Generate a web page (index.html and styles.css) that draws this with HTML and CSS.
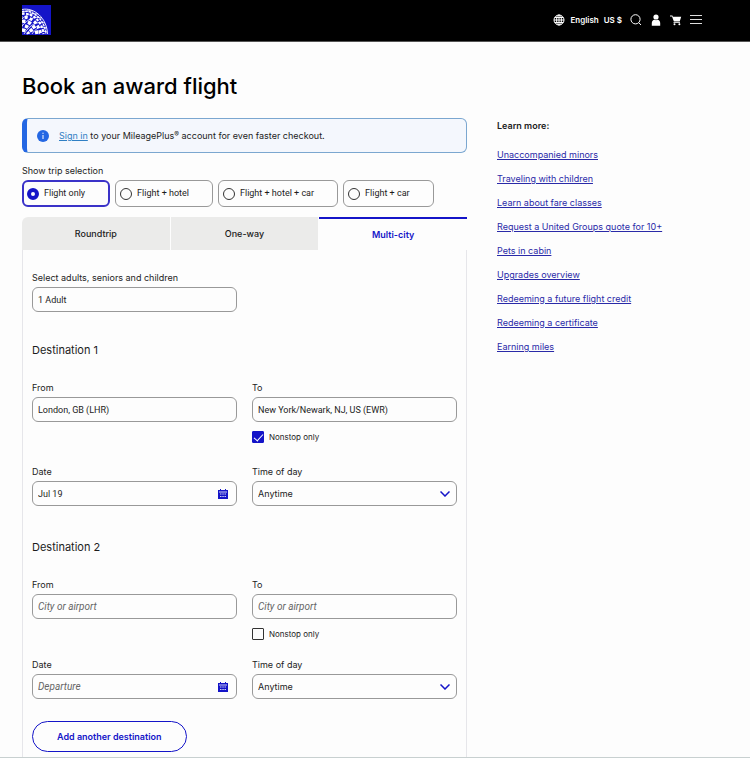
FILE: index.html
```html
<!doctype html>
<html lang="en">
<head>
    <meta charset="UTF-8">
    <meta name="viewport" content="width=device-width, initial-scale=1.0">
    <title>Book an award flight</title>
    <link rel="stylesheet" href="styles.css">
</head>
<body>
<header class="topbar">
    <a href="#" class="logo" aria-label="Home">
        <svg width="29" height="30" viewBox="0 0 29 30">
            <rect width="29" height="30" fill="#1414c8"/>
            <g fill="none" stroke="#fff">
                <path d="M0 4.500C12 2 25 13 25.500 29" stroke-width=".9"/>
                <path d="M0 6.500C11 4 23 15 23.800 29" stroke-width="1.400" stroke-dasharray="2.500 .8"/>
                <path d="M0 9C10 7 20 16 21.500 29" stroke-width="2.200" stroke-dasharray="2.600 1.400"/>
                <path d="M0 12.500C9 11 17 19 18.500 29" stroke-width="3" stroke-dasharray="3 2.200" stroke-dashoffset="2.500"/>
                <path d="M0 16.500C7 15 14 22 15 29" stroke-width="3.400" stroke-dasharray="3.400 2.600"/>
                <path d="M0 20.500C5 20 10 25 11 29" stroke-width="3.400" stroke-dasharray="3.400 2.600" stroke-dashoffset="3"/>
                <path d="M0 25C3 25 6 27 6.500 29" stroke-width="3.400" stroke-dasharray="3.400 2.400"/>
                <path d="M0 8C3 6 7 5 11 6M0 14C5 9 10 8 16 9M0 21C6 14 12 11 20 13M2 29C8 20 14 16 23 18M10 29C14 23 18 21 25 23M17 29C20 26 22 26 25 27" stroke-width=".8"/>
            </g>
        </svg>
    </a>
    <nav class="tools">
        <a href="#" class="language">
            <svg width="12" height="12" viewBox="0 0 12 12" fill="none" stroke="#fff">
                <circle cx="6" cy="6" r="5"/>
                <ellipse cx="6" cy="6" rx="2.400" ry="5"/>
                <path d="M6 1v10M1 6h10M1.800 3.500h8.400M1.800 8.500h8.400"/>
            </svg>
            <span>English</span>
            <span>US $</span>
        </a>
        <button class="tool" aria-label="Search">
            <svg width="12" height="12" viewBox="0 0 12 12" fill="none" stroke="#fff">
                <circle cx="5.500" cy="5.300" r="4.600"/>
                <path d="M8.800 8.700l2.200 2.300"/>
            </svg>
        </button>
        <button class="tool" aria-label="Account">
            <svg width="12" height="12" viewBox="0 0 12 12" fill="#fff">
                <circle cx="6" cy="3" r="2.600"/>
                <path d="M1.800 11.700V9c0-2 1.200-3 2.700-3.200.9.500 2.100.5 3 0C9 6 10.200 7 10.200 9v2.700z"/>
            </svg>
        </button>
        <button class="tool" aria-label="Cart">
            <svg width="12" height="12" viewBox="0 0 12 12" fill="#fff">
                <path d="M0 1.500h2.400l.5 1.300h8.300l-1.500 4.700H3.900L2 2.500H0z"/>
                <path d="M3.500 8.200h6.500v.8h-6.500z"/>
                <circle cx="4.500" cy="10.200" r="1"/>
                <circle cx="9.400" cy="10.200" r="1"/>
            </svg>
        </button>
        <button class="tool" aria-label="Menu">
            <svg width="12" height="12" viewBox="0 0 12 12" fill="none" stroke="#ddd">
                <path d="M0 1.500h12M0 5.500h12M0 9.500h12"/>
            </svg>
        </button>
    </nav>
</header>

<div class="page">
    <main>
        <h1>Book an award flight</h1>

        <div class="notice">
            <svg width="12" height="12" viewBox="0 0 12 12">
                <circle cx="6" cy="6" r="6" fill="#2467e3"/>
                <path d="M6 5v4M6 2.700v1.200" stroke="#fff"/>
            </svg>
            <p><a href="#">Sign in</a> to your MileagePlus<sup>®</sup> account for even faster checkout.</p>
        </div>

        <form>
            <fieldset class="trips">
                <legend>Show trip selection</legend>
                <div class="tripList">
                    <label class="trip"><input type="radio" name="trip" checked>Flight only</label>
                    <label class="trip"><input type="radio" name="trip">Flight + hotel</label>
                    <label class="trip"><input type="radio" name="trip">Flight + hotel + car</label>
                    <label class="trip"><input type="radio" name="trip">Flight + car</label>
                </div>
            </fieldset>

            <div class="tabs" role="tablist">
                <button type="button" role="tab">Roundtrip</button>
                <button type="button" role="tab">One-way</button>
                <button type="button" role="tab" class="active" aria-selected="true">Multi-city</button>
            </div>

            <div class="panel">
                <div class="fields passengers">
                    <div class="field">
                        <label for="travelers">Select adults, seniors and children</label>
                        <input type="text" id="travelers" value="1 Adult">
                    </div>
                </div>

                <section class="destination">
                    <h2>Destination 1</h2>
                    <div class="fields">
                        <div class="field">
                            <label for="from1">From</label>
                            <input type="text" id="from1" value="London, GB (LHR)">
                        </div>
                        <div class="field">
                            <label for="to1">To</label>
                            <input type="text" id="to1" value="New York/Newark, NJ, US (EWR)">
                            <label class="nonstop"><input type="checkbox" checked>Nonstop only</label>
                        </div>
                        <div class="field">
                            <label for="date1">Date</label>
                            <div class="control">
                                <input type="text" id="date1" value="Jul 19">
                                <svg class="calendar" width="10" height="10" viewBox="0 0 10 10">
                                    <path d="M0 1h2V0h1v1h4V0h1v1h2v9H0z" fill="#1414c8"/>
                                    <path d="M1 3h8M2 5h1.500M4.300 5h1.500M6.500 5H8M2 7.500h1.500M4.300 7.500h1.500M6.500 7.500H8" stroke="#fff" stroke-width=".8"/>
                                </svg>
                            </div>
                        </div>
                        <div class="field">
                            <label for="time1">Time of day</label>
                            <div class="control">
                                <select id="time1"><option>Anytime</option></select>
                                <svg class="chevron" width="10" height="6" viewBox="0 0 10 6" fill="none" stroke="#1414c8" stroke-width="1.500">
                                    <path d="M.500.500L5 5 9.500.500"/>
                                </svg>
                            </div>
                        </div>
                    </div>
                </section>

                <section class="destination">
                    <h2>Destination 2</h2>
                    <div class="fields">
                        <div class="field">
                            <label for="from2">From</label>
                            <input type="text" id="from2" placeholder="City or airport">
                        </div>
                        <div class="field">
                            <label for="to2">To</label>
                            <input type="text" id="to2" placeholder="City or airport">
                            <label class="nonstop"><input type="checkbox">Nonstop only</label>
                        </div>
                        <div class="field">
                            <label for="date2">Date</label>
                            <div class="control">
                                <input type="text" id="date2" placeholder="Departure">
                                <svg class="calendar" width="10" height="10" viewBox="0 0 10 10">
                                    <path d="M0 1h2V0h1v1h4V0h1v1h2v9H0z" fill="#1414c8"/>
                                    <path d="M1 3h8M2 5h1.500M4.300 5h1.500M6.500 5H8M2 7.500h1.500M4.300 7.500h1.500M6.500 7.500H8" stroke="#fff" stroke-width=".8"/>
                                </svg>
                            </div>
                        </div>
                        <div class="field">
                            <label for="time2">Time of day</label>
                            <div class="control">
                                <select id="time2"><option>Anytime</option></select>
                                <svg class="chevron" width="10" height="6" viewBox="0 0 10 6" fill="none" stroke="#1414c8" stroke-width="1.500">
                                    <path d="M.500.500L5 5 9.500.500"/>
                                </svg>
                            </div>
                        </div>
                    </div>
                </section>

                <button type="button" class="addButton">Add another destination</button>
            </div>
        </form>
    </main>

    <aside class="learn">
        <h3>Learn more:</h3>
        <ul>
            <li><a href="#">Unaccompanied minors</a></li>
            <li><a href="#">Traveling with children</a></li>
            <li><a href="#">Learn about fare classes</a></li>
            <li><a href="#">Request a United Groups quote for 10+</a></li>
            <li><a href="#">Pets in cabin</a></li>
            <li><a href="#">Upgrades overview</a></li>
            <li><a href="#">Redeeming a future flight credit</a></li>
            <li><a href="#">Redeeming a certificate</a></li>
            <li><a href="#">Earning miles</a></li>
        </ul>
    </aside>
</div>
</body>
</html>
```
FILE: styles.css
```css
* {
    box-sizing: border-box;
}

body {
    margin: 0;
    background: #fdfdfd;
    color: #1c1c1c;
    font-family: Inter, Roboto, sans-serif;
    font-size: 9px;
    line-height: 13px;
}

h1, h2, h3, p, ul, fieldset {
    margin: 0;
    padding: 0;
}

svg {
    display: block;
    flex: none;
}

button, input, select {
    font: inherit;
    color: inherit;
}

/* header */
.topbar {
    display: flex;
    justify-content: space-between;
    align-items: center;
    background: #000;
    padding: 5px 48px 6px 22px;
    border-bottom: 1px solid #555;
}

.tools {
    display: flex;
    align-items: center;
    gap: 8px;
}

.language {
    display: flex;
    align-items: center;
    gap: 5px;
    color: #fff;
    font-size: 8px;
    font-weight: 600;
    text-decoration: none;
}

.tool {
    border: none;
    background: none;
    padding: 0;
    cursor: pointer;
}

/* page */
.page {
    display: grid;
    grid-template-columns: minmax(0, 1fr) 231px;
    gap: 30px;
    padding: 0 22px;
    border-bottom: 1px solid #c8d0d0;
}

h1 {
    margin: 28px 0 16px;
    font-size: 22px;
    font-weight: 500;
    line-height: 32px;
    color: #000;
}

.notice {
    display: flex;
    align-items: center;
    gap: 10px;
    padding: 10px;
    border: 1px solid #7ba7d0;
    border-left: 5px solid #2467e3;
    border-radius: 6px;
    background: #f4f7fd;
}

.notice a {
    color: #2f7fc4;
}

.notice sup {
    font-size: 7px;
    line-height: 1;
    vertical-align: 2px;
}

/* trip selection */
.trips {
    margin-top: 11px;
    border: none;
}

.trips legend {
    padding: 0;
}

.tripList {
    display: flex;
    gap: 5px;
    margin-top: 3px;
}

.trip {
    display: flex;
    align-items: center;
    gap: 5px;
    padding: 6px 23px 6px 4px;
    border: 1px solid #999;
    border-radius: 6px;
    font-family: Roboto, sans-serif;
    cursor: pointer;
}

.trip:has(input:checked) {
    border: 2px solid #3a32c8;
    padding: 5px 23px 5px 3px;
}

.trip input {
    appearance: none;
    width: 12px;
    height: 12px;
    margin: 0;
    border: 1px solid #333;
    border-radius: 50%;
}

.trip input:checked {
    border: 4px solid #1414c8;
}

/* tabs */
.tabs {
    display: grid;
    grid-template-columns: repeat(3, 1fr);
    gap: 1px;
    margin-top: 10px;
}

.tabs button {
    height: 33px;
    padding: 0;
    border: none;
    background: #ebebea;
    font-weight: 500;
    cursor: pointer;
}

.tabs button:first-child {
    border-top-left-radius: 6px;
}

.tabs .active {
    border-top: 2px solid #1414c8;
    background: #fdfdfd;
    color: #1414c8;
    font-weight: 600;
}

.panel {
    padding: 21px 9px 5px;
    border: 1px solid #e6e6ea;
    border-width: 0 1px;
}

/* fields */
.fields {
    display: grid;
    grid-template-columns: 1fr 1fr;
    gap: 21px 15px;
}

.passengers {
    margin-bottom: 28px;
}

.destination + .destination {
    margin-top: 31px;
}

.destination + .destination .fields {
    row-gap: 17px;
}

h2 {
    margin-bottom: 21px;
    font-size: 11px;
    font-weight: 400;
    line-height: 20px;
}

.field label {
    display: block;
}

.field input[type="text"], .field select {
    display: block;
    appearance: none;
    width: 100%;
    height: 25px;
    margin-top: 3px;
    padding: 0 5px;
    border: 1px solid #999;
    border-radius: 6px;
    background: #fdfdfd;
}

.field input[type="text"] {
    font-family: Roboto, sans-serif;
}

.field input::placeholder {
    color: #666;
    font-size: 10px;
    font-style: italic;
}

.control {
    position: relative;
}

.calendar, .chevron {
    position: absolute;
    pointer-events: none;
}

.calendar {
    top: 8px;
    right: 9px;
}

.chevron {
    top: 10px;
    right: 7px;
}

.field .nonstop {
    display: flex;
    align-items: center;
    gap: 5px;
    margin-top: 8px;
    font-size: 8px;
    line-height: 14px;
}

.nonstop input {
    appearance: none;
    width: 12px;
    height: 12px;
    margin: 0;
    border: 1px solid #333;
    border-radius: 1px;
}

.nonstop input:checked {
    display: grid;
    place-items: center;
    border-color: #1414c8;
    background: #1414c8;
}

.nonstop input:checked::after {
    content: "";
    width: 4px;
    height: 8px;
    border: solid #fff;
    border-width: 0 1px 1px 0;
    transform: translateY(-1px) rotate(42deg);
}

.addButton {
    display: block;
    margin-top: 22px;
    padding: 7px 24px;
    border: 1px solid #1414c8;
    border-radius: 16px;
    background: #fdfdfd;
    color: #1414c8;
    font-weight: 600;
    line-height: 15px;
    cursor: pointer;
}

/* links */
.learn {
    padding-top: 77px;
}

.learn h3 {
    margin-bottom: 16px;
    font-size: 9px;
    font-weight: 600;
}

.learn ul {
    display: grid;
    gap: 11px;
    list-style: none;
}

.learn a {
    color: #2a2aa8;
}
```
